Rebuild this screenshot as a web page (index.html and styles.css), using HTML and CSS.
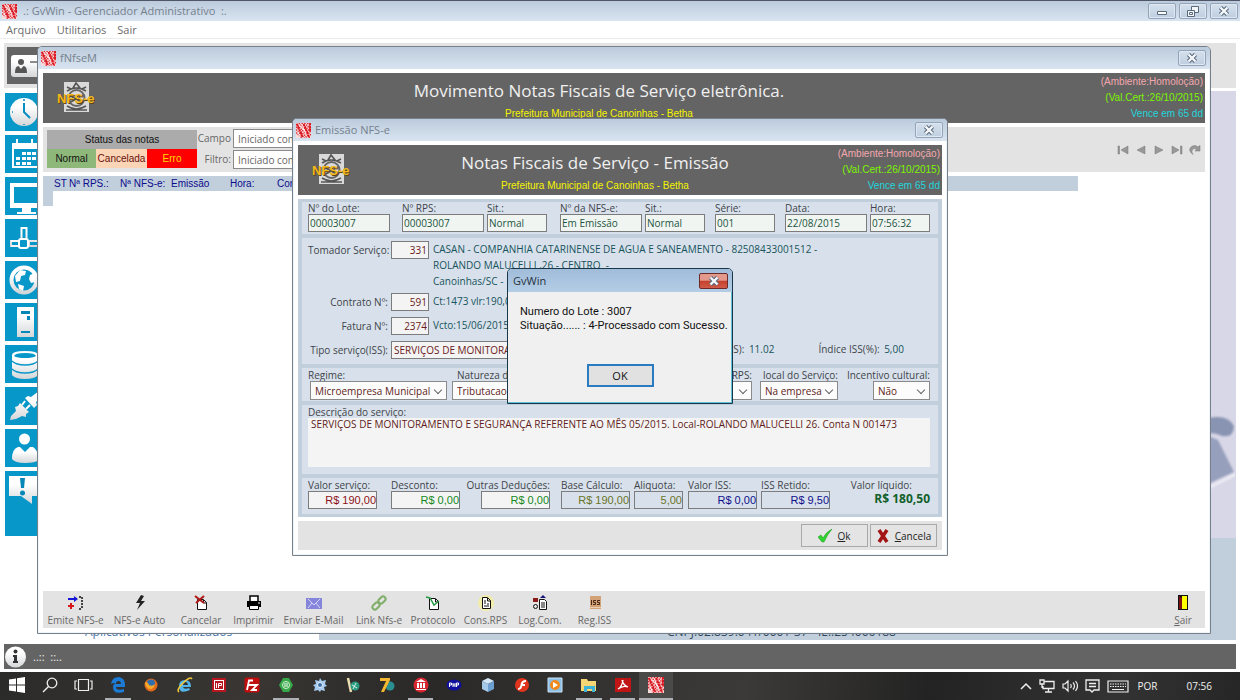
FILE: index.html
```html
<!DOCTYPE html>
<html lang="pt-BR">
<head>
<meta charset="utf-8">
<title>GvWin - Gerenciador Administrativo</title>
<link rel="stylesheet" href="styles.css">
</head>
<body>
<svg class="defs" aria-hidden="true">
  <defs>
    <symbol id="gv" viewBox="0 0 16 16">
      <path fill="#fbdcdc" d="M0 0h16v16H0z"/>
      <path stroke="#dc2630" stroke-width="1.400" stroke-dasharray="1.600 .8" d="M0 1l15 15M0 4l12 12M0 7l9 9M0 10l6 6M3 0l13 13M6 0l10 10M9 0l7 7M12 0l4 4"/>
      <path stroke="#d8141c" stroke-width="2" stroke-dasharray="2.500 .6" d="M1 1l6 14M8 1l6 14M15 0v9"/>
      <path stroke="#fff" stroke-width=".8" d="M6 1l5 12M2 9l2 6"/>
    </symbol>
    <symbol id="x" viewBox="0 0 12 10">
      <path fill="none" stroke="#596a7d" stroke-width="4.400" d="M2.500 1.500l7 7M9.500 1.500l-7 7"/>
      <path fill="none" stroke="#f7f9fb" stroke-width="2.400" d="M2.500 1.500l7 7M9.500 1.500l-7 7"/>
    </symbol>
    <symbol id="nfse" viewBox="0 0 38 32">
      <path fill="#d9d9d9" d="M7 1h25v30H7z"/>
      <path fill="none" stroke="#555" stroke-width="1.600" d="M19 2l-3 5h7zM10 10q9-6 19 0M10 25q9 6 19 0M12 14l14 8M26 14l-14 8M9 29h21M14 8l-4-2M25 8l4-2"/>
      <circle cx="19.500" cy="17" r="8" fill="none" stroke="#666" stroke-width="2"/>
      <text x="1" y="23" class="nfse-shadow">NFS-e</text>
      <text x="0" y="22" class="nfse-text">NFS-e</text>
    </symbol>
    <linearGradient id="tile" x1="0" y1="0" x2="0" y2="1"><stop offset="0.300" stop-color="#fff"/><stop offset="1" stop-color="#d4d6d8"/></linearGradient>
  </defs>
</svg>

<header class="titlebar app-title">
  <svg class="logo"><use href="#gv"/></svg>
  <h1>.: GvWin - Gerenciador Administrativo&nbsp; :.</h1>
  <div class="caption-buttons">
    <button class="cap" aria-label="Minimizar"><svg width="12" height="10"><path fill="#fff" stroke="#596a7d" d="M1.500 5.500h9v3h-9z"/></svg></button>
    <button class="cap" aria-label="Restaurar"><svg width="12" height="11"><path fill="#f4f7fa" stroke="#596a7d" d="M4.500.5h7v6h-7z"/><path fill="#f4f7fa" stroke="#596a7d" d="M.5 4.500h7v6h-7zM2.500 6.500h3v2h-3z"/></svg></button>
    <button class="cap" aria-label="Fechar"><svg width="12" height="10"><use href="#x"/></svg></button>
  </div>
</header>
<nav class="menubar"><a href="#">Arquivo</a><a href="#">Utilitarios</a><a href="#">Sair</a></nav>

<main class="workspace">
  <div class="topstrip"><button class="contact" aria-label="Clientes"><svg width="32" height="22"><rect width="40" height="22" rx="3" fill="url(#tile)"/><circle cx="10" cy="7" r="3" fill="#555"/><path fill="#555" d="M4 18q0-7 3.500-7l2.500 3 2.500-3q3.500 0 3.500 7z"/><path stroke="#666" stroke-width="1.500" d="M19 7h13"/></svg></button></div>
  <div class="desk">
    <div class="sidebar">
      <button class="tile" aria-label="Hora"><svg viewBox="0 0 36 38"><circle cx="19" cy="19" r="14" fill="url(#tile)"/><path fill="none" stroke="#0a8fc2" stroke-width="2" d="M19 10v9l6 6"/><path stroke="#0a8fc2" stroke-width="1.500" d="M19 6v2M7 19h1M19 31v1"/></svg></button>
      <button class="tile" aria-label="Agenda"><svg viewBox="0 0 36 38"><path fill="none" stroke="#fff" stroke-width="2" d="M8 9h30v23H8zM12 4v7M27 4v7"/><path fill="#fff" d="M8 9h30v5H8zM17 17h4v3h-4zM22 17h4v3h-4zM27 17h4v3h-4zM11 22h4v3h-4zM17 22h4v3h-4zM22 22h4v3h-4zM27 22h4v3h-4zM11 27h4v3h-4zM17 27h4v3h-4zM22 27h4v3h-4z"/></svg></button>
      <button class="tile" aria-label="Computador"><svg viewBox="0 0 36 38"><path fill="#fff" fill-rule="evenodd" d="M5 6h36v25H5zM9 10v16h32V10zM17 31h9v4h5v2H12v-2h5z"/></svg></button>
      <button class="tile" aria-label="Rede"><svg viewBox="0 0 36 38"><path fill="none" stroke="url(#tile)" stroke-width="2" d="M16.500 21V9h5v12M14 27H6v-5h8M24 22h12v5H24z"/><rect x="14" y="20" width="9" height="9" rx="2" fill="#0897c9" stroke="#fff" stroke-width="2"/><path stroke="#fff" stroke-width="1.500" d="M6 22h8M6 27h8"/></svg></button>
      <button class="tile" aria-label="Internet"><svg viewBox="0 0 36 38"><circle cx="19" cy="19" r="12.500" fill="#0897c9" stroke="url(#tile)" stroke-width="4"/><path fill="#fff" d="M10 15l5-6 6 1-1 4-4 1-1 5-4 1zM13 23l6 2-1 5-4-2zM25 14l5-2v9l-4 1-2-4z"/></svg></button>
      <button class="tile" aria-label="Servidor"><svg viewBox="0 0 36 38"><path fill="url(#tile)" d="M12 4h17v30H12z"/><path fill="#0787b8" d="M16 8h9v3h-9zM22 13h3v4h-3zM16 28h9v2h-9z"/></svg></button>
      <button class="tile" aria-label="Banco de dados"><svg viewBox="0 0 36 38"><path fill="url(#tile)" d="M7 10q0-4 13-4t13 4v20q-3 4-13 4T7 30z"/><path fill="#0897c9" d="M9 11q1-3 11-3t11 3q-3 2-11 2t-11-2z"/><path fill="none" stroke="#0897c9" stroke-width="1.500" d="M7 16q4 4 13 4t13-4M7 24q4 4 13 4t13-4"/></svg></button>
      <button class="tile" aria-label="Conexão"><svg viewBox="0 0 36 38"><path fill="url(#tile)" d="M5 33l1-4 5-5-1-4 3-1 2-3 9 9-3 2 0 3-4-1-6 3zM20 11l3-2 3 1 8-6 4 4-7 7 1 3-3 3z"/><path stroke="#fff" stroke-width="2" d="M17 18l3-4M21 22l4-4"/></svg></button>
      <button class="tile" aria-label="Usuário"><svg viewBox="0 0 36 38"><circle cx="19.500" cy="10" r="5.500" fill="#fff"/><path fill="url(#tile)" d="M7 30q0-10 6-12h2l5 5 5-5h3q5 3 6 13-4 3-14 3T7 30z"/></svg></button>
      <button class="tile last" aria-label="Avisos"><svg viewBox="0 0 36 38"><path fill="url(#tile)" d="M4 5h32v20H27v8l-11-8H4z"/><path fill="#0787b8" d="M15 7h5l-1 10h-3z"/><circle cx="17.500" cy="22" r="2.500" fill="#0787b8"/></svg></button>
    </div>
    <div class="wallpaper">
      <svg width="25" height="100" viewBox="0 0 25 100"><defs><filter id="soft"><feGaussianBlur stdDeviation="1"/></filter></defs><g filter="url(#soft)"><path fill="#8994b2" d="M-2 4q20-4 26 8 0 12-12 10-8-4-14-2z"/><path fill="#969fbb" d="M-2 22l10 4 16 32-26 12z"/><path stroke="#f2f2f8" stroke-width="2" d="M-2 74l28-14"/></g></svg>
    </div>
    <div class="desk-foot"><span class="apps">Aplicativos Personalizados</span><span class="cnpj">CNPJ:02.839.041/0001-37 - IE.:254006188</span></div>
  </div>

  <section class="window main-window" aria-label="fNfseM">
    <header class="titlebar">
      <svg class="logo"><use href="#gv"/></svg><h2>fNfseM</h2>
      <div class="caption-buttons"><button class="cap" aria-label="Fechar"><svg width="12" height="10"><use href="#x"/></svg></button></div>
    </header>
    <div class="banner">
      <svg class="nfse"><use href="#nfse"/></svg>
      <div class="banner-title"><h3>Movimento Notas Fiscais de Serviço eletrônica.</h3><p>Prefeitura Municipal de Canoinhas - Betha</p></div>
      <div class="cert"><span class="pink">(Ambiente:Homoloção)</span><span class="lime">(Val.Cert.:26/10/2015)</span><span class="cyan">Vence em 65 dd</span></div>
    </div>
    <div class="filterbar">
      <div class="status"><div class="status-head">Status das notas</div><span class="normal">Normal</span><span class="cancelada">Cancelada</span><span class="erro">Erro</span></div>
      <div class="filters">
        <label for="campo">Campo</label><input id="campo" value="Iniciado com">
        <label for="filtro">Filtro:</label><input id="filtro" value="Iniciado com">
      </div>
      <div class="navigator">
        <button aria-label="Primeiro"><svg viewBox="0 0 12 10"><path d="M1 1h1.500v8H1zM11 1v8L4 5z"/></svg></button>
        <button aria-label="Anterior"><svg viewBox="0 0 12 10"><path d="M10 1v8L2 5z"/></svg></button>
        <button aria-label="Próximo"><svg viewBox="0 0 12 10"><path d="M2 1v8l8-4z"/></svg></button>
        <button aria-label="Último"><svg viewBox="0 0 12 10"><path d="M1 1v8l7-4zM9.500 1H11v8H9.500z"/></svg></button>
        <button aria-label="Atualizar"><svg viewBox="0 0 12 10"><path d="M4 9.500Q-1 6 1.500 2.500 5-1 9 2l2-1.500V6H6l1.500-1.500Q5 2.500 3.500 4.500T4 9.500z"/></svg></button>
      </div>
    </div>
    <div class="grid-area">
      <table class="notes"><thead><tr><th>ST</th><th>Nª RPS.:</th><th>Nª NFS-e:</th><th>Emissão</th><th>Hora:</th><th>Contrato</th></tr></thead></table>
      <div class="row-mark"></div>
    </div>
    <footer class="toolbar">
      <div class="tools">
        <button><svg viewBox="0 0 16 16"><path fill="#1616d8" d="M0 3h6V1l4 3-4 3V5H0z"/><path fill="#d81818" d="M2 8h2v2h2v2H4v2H2v-2H0v-2h2z"/><path stroke="#111" stroke-width="1.500" stroke-dasharray="2 1" d="M11 2h3M14 2v12M11 14h3"/></svg>Emite NFS-e</button>
        <button><svg viewBox="0 0 16 16"><path fill="#222" d="M9 0L4 8h4l-3 7 8-9H9l3-5z"/></svg>NFS-e Auto</button>
        <button><svg viewBox="0 0 16 16"><path fill="#fff" stroke="#111" d="M4.500 4.500h6l3 3v7h-9zM10.500 5v3h3"/><path stroke="#b01818" stroke-width="2" d="M2 1l9 7M11 1L3 8"/></svg>Cancelar</button>
        <button><svg viewBox="0 0 16 16"><path fill="#fff" stroke="#000" stroke-width="1.500" d="M4 6V1h8v5"/><path d="M1 6h14v6H1z"/><path fill="#fff" stroke="#000" d="M3.500 10.500h9v4h-9z"/><path stroke="#fff" d="M12 8h2"/></svg>Imprimir</button>
        <button><svg viewBox="0 0 16 16"><path fill="#8585dc" d="M0 3h16v11H0z"/><path fill="none" stroke="#d6d6f5" d="M2 4l6 6 6-6M2 13l4-5M14 13l-4-5"/></svg>Enviar E-Mail</button>
        <button><svg viewBox="0 0 16 16"><g fill="none" stroke="#7fae68" stroke-width="2"><rect x="7" y="2.500" width="8" height="5" rx="2.500" transform="rotate(-45 11 5)"/><rect x="1" y="8.500" width="8" height="5" rx="2.500" transform="rotate(-45 5 11)"/></g></svg>Link Nfs-e</button>
        <button><svg viewBox="0 0 16 16"><path fill="#fff" stroke="#111" d="M4.500 3.500h6l3 3v8h-9zM10.500 4v3h3"/><path fill="none" stroke="#2a9b48" stroke-width="1.500" d="M1 2l4 1 4 7 5-4"/></svg>Protocolo</button>
        <button><svg viewBox="0 0 16 16"><circle cx="8" cy="8" r="8" fill="#f2ecaa"/><path fill="#fff" stroke="#111" d="M4.500 2.500h5l3 3v8h-8zM9.500 3v3h3M6 6h2M6 8h2M6 11h5M9 9h2"/></svg>Cons.RPS</button>
        <button><svg viewBox="0 0 16 16"><path fill="#8b1a1a" d="M1 3h5v4H1z"/><circle cx="3.500" cy="11.500" r="2" fill="none" stroke="#111"/><path fill="#15157a" d="M11 0l3 3H8z"/><path fill="#fff" stroke="#111" d="M7.500 4.500h5l2 2v8h-7zM9 8h4M9 10h4M9 12h4"/></svg>Log.Com.</button>
        <button><svg viewBox="0 0 16 16"><path fill="#d3a276" d="M3 1h11v13H3z"/><path fill="#e9d0b5" d="M3 12h11v1H3z"/><path fill="none" stroke="#4a2818" d="M4.500 5v5M9 5.500H6.500v2H8.500v2H6M13 5.500h-2.500v2h2v2H10"/></svg>Reg.ISS</button>
      </div>
      <button class="exit"><svg viewBox="0 0 16 16"><path fill="#111" d="M3 0h10v15H3z"/><path fill="#ff0" d="M7 1h5v13H7z"/><path fill="#7b1212" d="M4 1l3 2v11H4z"/></svg><span><u>S</u>air</span></button>
    </footer>
  </section>

  <section class="window emission" aria-label="Emissão NFS-e">
    <header class="titlebar">
      <svg class="logo"><use href="#gv"/></svg><h2>Emissão NFS-e</h2>
      <div class="caption-buttons"><button class="cap" aria-label="Fechar"><svg width="12" height="10"><use href="#x"/></svg></button></div>
    </header>
    <div class="banner">
      <svg class="nfse"><use href="#nfse"/></svg>
      <div class="banner-title"><h3>Notas Fiscais de Serviço - Emissão</h3><p>Prefeitura Municipal de Canoinhas - Betha</p></div>
      <div class="cert"><span class="pink">(Ambiente:Homoloção)</span><span class="lime">(Val.Cert.:26/10/2015)</span><span class="cyan">Vence em 65 dd</span></div>
    </div>
    <form class="panel">
      <div class="sec ident">
        <div class="field"><label for="lote">Nº do Lote:</label><input id="lote" value="00003007"></div>
        <div class="field"><label for="rps">Nº RPS:</label><input id="rps" value="00003007"></div>
        <div class="field"><label for="sit1">Sit.:</label><input id="sit1" class="short" value="Normal"></div>
        <div class="field"><label for="nfs">Nº da NFS-e:</label><input id="nfs" value="Em Emissão"></div>
        <div class="field"><label for="sit2">Sit.:</label><input id="sit2" class="short" value="Normal"></div>
        <div class="field"><label for="serie">Série:</label><input id="serie" class="short" value="001"></div>
        <div class="field"><label for="data">Data:</label><input id="data" value="22/08/2015"></div>
        <div class="field"><label for="hora">Hora:</label><input id="hora" class="short" value="07:56:32"></div>
      </div>
      <div class="sec service">
        <label for="tomador">Tomador Serviço:</label><input id="tomador" value="331">
        <div class="info addr">CASAN - COMPANHIA CATARINENSE DE AGUA E SANEAMENTO - 82508433001512 -<br>ROLANDO MALUCELLI ,26 - CENTRO&nbsp; -<br>Canoinhas/SC -</div>
        <label for="contrato">Contrato Nº:</label><input id="contrato" value="591"><div class="info">Ct:1473 vlr:190,00</div>
        <label for="fatura">Fatura Nº:</label><input id="fatura" value="2374"><div class="info">Vcto:15/06/2015</div>
        <label for="tipo">Tipo serviço(ISS):</label>
        <div class="tipo"><input id="tipo" value="SERVIÇOS DE MONITORAMENTO"><span class="iss">(ISS): <b>11.02</b></span><span class="indice">Índice ISS(%): <b>5,00</b></span></div>
      </div>
      <div class="sec options">
        <div class="field regime"><label for="regime">Regime:</label><span class="pick"><select id="regime"><option>Microempresa Municipal</option></select></span></div>
        <div class="field nat"><label for="natureza">Natureza da operação:</label><span class="pick"><select id="natureza"><option>Tributacao no municipio</option></select></span></div>
        <div class="field rps"><label for="tiporps">Tipo RPS:</label><span class="pick"><select id="tiporps"><option>RPS</option></select></span></div>
        <div class="field loc"><label for="local">local do Serviço:</label><span class="pick"><select id="local"><option>Na empresa</option></select></span></div>
        <div class="field inc"><label for="incentivo">Incentivo cultural:</label><span class="pick"><select id="incentivo"><option>Não</option></select></span></div>
      </div>
      <div class="sec description"><label for="desc">Descrição do serviço:</label><textarea id="desc" spellcheck="false">SERVIÇOS DE MONITORAMENTO E SEGURANÇA REFERENTE AO MÊS 05/2015. Local-ROLANDO MALUCELLI 26. Conta N 001473</textarea></div>
      <div class="sec totals">
        <div class="field red"><label for="valor">Valor serviço:</label><input id="valor" value="R$ 190,00"></div>
        <div class="field green"><label for="desconto">Desconto:</label><input id="desconto" value="R$ 0,00"></div>
        <div class="field green right"><label for="deducoes">Outras Deduções:</label><input id="deducoes" value="R$ 0,00"></div>
        <div class="field olive"><label for="base">Base Cálculo:</label><input id="base" value="R$ 190,00"></div>
        <div class="field olive rate"><label for="aliquota">Aliquota:</label><input id="aliquota" value="5,00"></div>
        <div class="field blue"><label for="iss">Valor ISS:</label><input id="iss" value="R$ 0,00"></div>
        <div class="field blue"><label for="retido">ISS Retido:</label><input id="retido" value="R$ 9,50"></div>
        <div class="field net"><label for="liquido">Valor líquido:</label><output id="liquido">R$ 180,50</output></div>
      </div>
    </form>
    <footer class="actions">
      <button><svg width="14" height="14" viewBox="0 0 14 14"><path fill="#2fd52f" stroke="#159015" stroke-width=".5" d="M0 8l3-2 2 3Q8 3 14 0 9 6 6 13H4z"/></svg><span><u>O</u>k</span></button>
      <button><svg width="14" height="14" viewBox="0 0 14 14"><path fill="none" stroke="#a31515" stroke-width="3.500" d="M3 1l8 12M11 1L3 13"/></svg><span><u>C</u>ancela</span></button>
    </footer>
  </section>

  <section class="message" role="dialog" aria-label="GvWin">
    <header><h2>GvWin</h2><button class="close" aria-label="Fechar"><svg width="12" height="10"><use href="#x"/></svg></button></header>
    <div class="message-body"><p>Numero do Lote : 3007<br>Situação...... : 4-Processado com Sucesso.</p><button class="ok">OK</button></div>
  </section>
</main>

<div class="statusbar"><svg width="23" height="22" viewBox="0 0 23 22"><circle cx="11.500" cy="11" r="10.500" fill="url(#tile)"/><circle cx="11.500" cy="5.500" r="2" fill="#333"/><path fill="#333" d="M9 9h4v6h1v2H9v-2h1v-4H9z"/></svg><span>..:: &nbsp;::..</span></div>

<footer class="taskbar">
  <div class="apps-bar">
    <button aria-label="Iniciar"><svg viewBox="0 0 16 16"><path fill="#fff" d="M0 2.500l7-1v6H0zM8 1.300L16 0v7.500H8zM0 8.500h7v6l-7-1zM8 8.500h8V16l-8-1.300z"/></svg></button>
    <button aria-label="Pesquisar"><svg viewBox="0 0 16 16"><circle cx="10" cy="6" r="4.800" fill="none" stroke="#eee" stroke-width="1.300"/><path stroke="#eee" stroke-width="1.500" d="M6.500 9.500L1 15"/></svg></button>
    <button aria-label="Visão de tarefas"><svg class="wide" viewBox="0 0 20 16"><path fill="none" stroke="#eee" stroke-width="1.200" d="M4.500 2.500h10v11h-10zM3 4H1v8h2M16 4h2v8h-2"/></svg></button>
    <button class="on" aria-label="Edge"><svg viewBox="0 0 16 16"><path fill="#1b7bd6" d="M1 7Q2 0 9 0q6 1 6 8v2H6q0 4 8 2v3Q3 18 3 10q0-3 3-4-4 0-5 1zm5 0h5q0-3-2.500-3T6 7z"/></svg></button>
    <button aria-label="Firefox"><svg viewBox="0 0 16 16"><circle cx="8" cy="8" r="6.500" fill="#e56a17"/><circle cx="8" cy="6.500" r="4" fill="#2f6fb0"/><path fill="#f6a82a" d="M2 5q3 0 4 3 3 2 6-1-1 6-6 5-4-2-4-7z"/></svg></button>
    <button aria-label="Internet Explorer"><svg viewBox="0 0 16 16"><path fill="#52b6ea" d="M2 9Q2 3 8 3q6 0 6 7H6q1 3 6 1l1 2Q2 18 2 9zm4-1h5q-.5-3-2.500-3T6 8z"/><path fill="none" stroke="#f3c838" stroke-width="1.500" d="M2 15Q-1 13 6 6t9-4"/></svg></button>
    <button aria-label="IP"><svg viewBox="0 0 16 16"><path fill="#fff" stroke="#b71820" stroke-width="2" d="M2 2h12v12H2z"/><path fill="#b71820" d="M4 4h8v8H4z"/><path fill="none" stroke="#fff" d="M5.500 6v5M7.500 11V6.500h3v2h-3"/></svg></button>
    <button aria-label="FileZilla"><svg viewBox="0 0 16 16"><rect x=".5" y=".5" width="15" height="15" rx="2" fill="#c00d0d"/><path fill="none" stroke="#fff" stroke-width="1.800" d="M3 13L5 3.500h4M4 8h4M8 8h5l-5 5h5"/></svg></button>
    <button class="on" aria-label="Servidor local"><svg viewBox="0 0 16 16"><path fill="#37a847" d="M5 1h6l4 7-4 7H5L1 8z"/><circle cx="8" cy="8" r="3.500" fill="none" stroke="#d9f2d9"/><path stroke="#fff" d="M6 7h4M6 9h4"/></svg></button>
    <button aria-label="Configurador"><svg viewBox="0 0 16 16"><path fill="#a8cdf0" d="M8 1l2 3 4-1-1 4 2 2-3 1 1 4-4-1-1 2-2-2-4 1 1-4-2-2 3-1-1-4 4 1z"/><circle cx="8" cy="8" r="2.500" fill="#3f6da3" stroke="#e3effa"/></svg></button>
    <button aria-label="Delphi"><svg viewBox="0 0 16 16"><path stroke="#e9dfb0" stroke-width="2.500" d="M3 1l3 14"/><circle cx="10" cy="9" r="4.500" fill="#2a9b80"/><path fill="none" stroke="#d8f0e8" d="M8 12l3-6M7 8l5 3"/></svg></button>
    <button aria-label="Delphi 7"><svg viewBox="0 0 16 16"><circle cx="11" cy="9" r="4.500" fill="#2a8f90"/><path fill="#f2b630" d="M1 1h10v2L5 15H2l5-11H1z"/></svg></button>
    <button class="on" aria-label="Banco"><svg viewBox="0 0 16 16"><circle cx="8" cy="8" r="7.500" fill="#d7262e"/><path fill="#fff" d="M8 2l5 3H3zM4 6h2v5H4zM7 6h2v5H7zM10 6h2v5h-2zM3 12h10v1H3z"/></svg></button>
    <button aria-label="PHP"><svg viewBox="0 0 16 16"><ellipse cx="8" cy="8" rx="7.500" ry="5.500" fill="#10109a"/><path fill="none" stroke="#fff" d="M3.500 10V6h2v2h-2M7 6v4M9 6v4M7 8h2M10.500 10V6h2v2h-2"/></svg></button>
    <button aria-label="VirtualBox"><svg viewBox="0 0 16 16"><path fill="#d5e8f9" d="M2 4l6-3 6 3-6 3z"/><path fill="#a6c9ea" d="M2 4l6 3v8l-6-3z"/><path fill="#6e9fd1" d="M14 4L8 7v8l6-3z"/></svg></button>
    <button aria-label="Flash"><svg viewBox="0 0 16 16"><circle cx="8" cy="8" r="7" fill="#e1341c"/><path fill="none" stroke="#fff" stroke-width="2" d="M12 4Q8 4 7.500 8T4 12M7 8h4"/></svg></button>
    <button aria-label="Media Player"><svg viewBox="0 0 16 16"><path fill="#8cc0e8" stroke="#c9e2f5" d="M1 1h14v14H1z"/><circle cx="8" cy="8" r="5" fill="#f08a1d"/><path fill="#fff" d="M6 5v6l5-3z"/></svg></button>
    <button class="on" aria-label="Explorador"><svg viewBox="0 0 16 16"><path fill="#f4d675" d="M0 2h6l1 2h8v10H0z"/><path fill="#3cb3d9" d="M3 9h11v6h-3v-3H6v3H3z"/></svg></button>
    <button class="on" aria-label="Acrobat"><svg viewBox="0 0 16 16"><path fill="#c11515" d="M0 1h16v14H0z"/><path fill="none" stroke="#fff" stroke-width="1.300" d="M7 3q1 5 6 7-5-2-10 2 4-2 5-9"/></svg></button>
    <button class="on current" aria-label="GvWin"><svg><use href="#gv"/></svg></button>
  </div>
  <div class="tray">
    <svg width="12" height="8"><path fill="none" stroke="#eee" stroke-width="1.500" d="M1 7l5-5 5 5"/></svg>
    <svg width="16" height="14"><path fill="none" stroke="#eee" stroke-width="1.300" d="M5 2.500h10v7H4V7M9.500 10v3M6 13h7M1 1h4v4H1zM3 5v4"/></svg>
    <svg width="16" height="14"><path fill="none" stroke="#eee" stroke-width="1.200" d="M1 5h2l3-3v10L3 9H1zM8.500 5q1.500 2 0 4M11 3.500q3 3.500 0 7M13.500 2q4 5 0 10"/></svg>
    <svg width="15" height="15"><path fill="none" stroke="#eee" stroke-width="1.300" d="M1 1h13v10H9l-2 2-2-2H1zM4 4.500h7M4 7.500h7"/></svg>
    <svg width="22" height="13"><path fill="none" stroke="#eee" stroke-width="1.200" d="M1 1h20v11H1z"/><path stroke="#eee" stroke-dasharray="1.500 1" d="M3 4h16M3 6.500h16"/><path stroke="#eee" d="M5 9.500h12"/></svg>
    <span class="lang">POR</span><time>07:56</time>
  </div>
</footer>
</body>
</html>
```
FILE: styles.css
```css
* { box-sizing: border-box; }
html, body { height: 100%; }
body {
  margin: 0; display: flex; flex-direction: column; overflow: hidden; background: #fff;
  font: 11px/14px "Open Sans", "Noto Sans", sans-serif; color: #3f444a;
}
h1, h2, h3, p { margin: 0; font-weight: 400; }
button, input, select, textarea { font: inherit; color: inherit; margin: 0; border-radius: 0; }
button { padding: 0; border: 0; background: none; }
svg { display: block; flex: none; }
.defs { position: absolute; width: 0; height: 0; }
.nfse-text, .nfse-shadow { font: 700 13px "Liberation Sans", sans-serif; }

/* Title bars */
.titlebar { display: flex; align-items: center; gap: 4px; flex: none; height: 22px; background: linear-gradient(#bccbdc, #d8e4f0); color: #75818e; }
.titlebar h1, .titlebar h2 { font-size: 11px; line-height: 14px; flex: 1; }
.logo { width: 15px; height: 15px; }
.app-title { border-top: 1px solid #4f5767; height: 21px; padding: 0 2px; gap: 6px; }
.caption-buttons { display: flex; gap: 3px; }
.cap { width: 28px; height: 16px; display: grid; place-items: center; border: 1px solid #93a4ba; border-radius: 2px; background: linear-gradient(#d5e0ec, #bfcfe0); box-shadow: inset 0 0 0 1px #dfe8f1; }
.menubar { flex: none; height: 18px; display: flex; gap: 11px; padding: 2px 6px; border-bottom: 1px solid #ececec; }
.menubar a { color: #6c6c6c; text-decoration: none; }

/* Desktop */
.workspace { flex: 1; position: relative; min-height: 0; display: flex; flex-direction: column; padding: 4px 4px 3px; }
.topstrip { flex: none; height: 45px; background: #e3e3e3; padding: 4px 3px; }
.contact { width: 36px; height: 37px; background: #646464; display: flex; align-items: center; padding-left: 4px; overflow: hidden; }
.desk { flex: 1; display: grid; grid-template-columns: 1fr 26px; grid-template-rows: 1fr 102px; padding-top: 3px; min-height: 0; }
.sidebar { width: 40px; padding: 2px 0 0 1px; display: flex; flex-direction: column; gap: 4px; grid-row: 1; grid-column: 1; height: 0; }
.tile { flex: none; height: 38px; width: 39px; background: #0897c9; overflow: hidden; }
.tile svg { width: 36px; height: 38px; }
.tile.last { height: 65px; }
.tile.last svg { margin-bottom: 27px; }
.wallpaper { grid-column: 2; background: #d8d7e7; display: flex; align-items: flex-end; padding-bottom: 24px; }
.desk-foot { grid-row: 2; grid-column: 1 / 3; display: flex; align-items: flex-end; font-size: 12px; line-height: 16px; }
.apps { width: 315px; padding-left: 81px; color: #4b79ad; }
.cnpj { flex: 1; align-self: stretch; display: flex; align-items: flex-end; background: #c1cfdc; padding-left: 348px; color: #33475c; }

/* MDI windows */
.window { position: absolute; display: flex; flex-direction: column; background: #fff; border: 1px solid #76808b; border-radius: 5px 5px 0 0; padding: 0 5px 5px; box-shadow: inset 0 0 0 1px #f2f5f8; }
.window > .titlebar { margin: 0 -5px 4px; padding: 0 4px 0 3px; border-radius: 4px 4px 0 0; }
.main-window { left: 37px; right: 29px; top: 7px; bottom: 9px; }
.emission { left: 292px; top: 79px; width: 656px; }
.banner { flex: none; height: 50px; background: #646464; display: grid; grid-template-columns: 70px 1fr 120px; overflow: hidden; }
.nfse { width: 38px; height: 34px; margin: 7px 0 0 14px; }
.nfse-text { fill: #f4b81c; }
.nfse-shadow { fill: #5d4410; }
.banner-title { text-align: center; padding-top: 5px; }
.banner h3 { color: #f0f0f0; font-size: 17px; line-height: 25px; }
.banner p { color: #f4f400; font: 10px/22px "Liberation Sans", sans-serif; }
.cert { display: flex; flex-direction: column; text-align: right; font: 10px/16px "Liberation Sans", sans-serif; padding: 1px 2px; }
.pink { color: #f3a7ae; } .lime { color: #7df500; } .cyan { color: #1fd6dc; }

.filterbar { flex: none; display: flex; height: 45px; margin-top: 4px; background: #e3e3e3; padding: 2px 4px; }
.status { width: 150px; display: grid; grid-template-columns: 49px 51px 50px; grid-template-rows: 19px 19px; margin-top: 1px; text-align: center; font: 10px/19px "Liberation Sans", sans-serif; color: #111; }
.status-head { grid-column: 1 / 4; background: #ababab; }
.normal { background: #8db87a; } .cancelada { background: #fbd5b5; color: #6a1010; } .erro { background: #f00; color: #ffd800; }
.filters { display: grid; grid-template-columns: 34px 180px; grid-auto-rows: 19px; gap: 2px; color: #666; font-size: 10px; line-height: 18px; text-align: right; }
.filters input { border: 1px solid #8b8b8b; background: #fff; padding: 0 4px; font-size: 10px; }
.navigator { margin-left: auto; display: flex; gap: 6px; align-items: center; }
.navigator svg { width: 12px; height: 10px; fill: #989898; stroke: #777; stroke-width: .5; }
.grid-area { flex: 1; margin-top: 4px; }
.notes { width: 1035px; border-collapse: collapse; table-layout: fixed; background: #c1cfdc; color: #0b0b8c; font: 10px/15px "Liberation Sans", sans-serif; }
.notes th { padding: 0; font-weight: 400; text-align: left; height: 15px; }
.notes th:nth-child(1) { width: 26px; padding-left: 11px; }
.notes th:nth-child(2) { width: 51px; }
.notes th:nth-child(3) { width: 51px; }
.notes th:nth-child(4) { width: 59px; }
.notes th:nth-child(5) { width: 47px; }
.row-mark { width: 10px; height: 15px; background: #c1cfdc; }
.toolbar { flex: none; display: flex; height: 37px; background: #e3e3e3; color: #696969; }
.tools { display: grid; grid-template-columns: 65px 63px 60px 45px 75px 56px 52px 53px 56px 53px; }
.toolbar button { display: flex; flex-direction: column; align-items: center; gap: 2px; padding-top: 4px; font-size: 10px; white-space: nowrap; }
.toolbar svg { width: 16px; height: 16px; }
.exit { width: 44px; margin-left: auto; }

/* Emission form */
.panel { margin-top: 4px; padding: 3px 4px; background: #c1cfdc; display: flex; flex-direction: column; gap: 4px; }
.sec { background: #d8e1eb; padding: 0 8px 0 6px; }
.field { display: flex; flex-direction: column; align-items: flex-start; white-space: nowrap; }
.panel label, .panel span { font-size: 10px; }
.field label { line-height: 11px; }
.sec input { height: 18px; border: 1px solid #7c7c7c; padding: 0 1px; background: #f4f4f4; font-size: 10px; }
.ident { display: grid; grid-template-columns: 94px 85px 73px 85px 70px 70px 85px 60px; height: 32px; padding-top: 1px; }
.ident input { width: 82px; background: #f0f5f2; color: #1c5440; }
.ident input.short { width: 60px; }
.service { display: grid; grid-template-columns: 80px 38px 1fr; column-gap: 3px; grid-template-rows: 46px 18px 18px 18px; row-gap: 6px; height: 126px; padding-top: 3px; align-items: start; }
.service label { text-align: right; line-height: 18px; white-space: nowrap; }
.service input { width: 38px; text-align: right; color: #6a1a20; }
.info { color: #17535c; font-size: 10px; line-height: 16px; padding-left: 1px; white-space: nowrap; }
.service .tipo { grid-column: 2 / 4; display: flex; line-height: 16px; }
.tipo input { width: 320px; text-align: left; padding-left: 2px; }
.tipo b { font-weight: 400; color: #17535c; margin-left: 2px; }
.iss { margin-left: 11px; }
.indice { margin-left: 44px; }
.options { display: flex; height: 33px; padding-top: 2px; }
.regime { width: 144px; padding-left: 2px; }
.regime label { margin-left: -2px; }
.nat { width: 154px; }
.nat label { padding-left: 5px; }
.rps { width: 146px; margin-right: 8px; align-items: flex-end; }
.loc { width: 78px; }
.loc label { padding-left: 3px; }
.inc { margin-left: auto; align-items: flex-end; }
.pick { position: relative; display: block; }
.pick select { appearance: none; display: block; height: 19px; width: 137px; border: 1px solid #8a8a8a; background: #fcfcfc; padding: 0 4px; color: #5f1c20; font-size: 10px; }
.nat .pick select, .rps .pick select { width: 146px; }
.loc .pick select { width: 78px; }
.inc .pick select { width: 57px; }
.pick::after { content: ""; position: absolute; right: 6px; top: 6px; width: 5px; height: 5px; border: solid #666; border-width: 0 1px 1px 0; transform: rotate(45deg); }
.description { height: 69px; display: flex; flex-direction: column; padding-top: 1px; }
.description label { line-height: 12px; }
.description textarea { height: 49px; resize: none; border: 0; background: #f4f4f4; padding: 0 3px; font-size: 10px; line-height: 13px; color: #5f1c20; overflow: hidden; }
.totals { display: grid; grid-template-columns: 83px 75px 95px 73px 54px 73px 73px 1fr; height: 36px; padding-top: 1px; }
.totals label { line-height: 12px; }
.totals input { width: 69px; text-align: right; font-family: "Liberation Sans", sans-serif; font-size: 11px; padding: 0; }
.totals .rate input { width: 49px; }
.totals .right { width: 84px; align-items: flex-end; }
.red input { color: #8c1218; } .green input { color: #128a20; }
.olive input { color: #6b7426; background: #d8e1eb; } .blue input { color: #10108c; background: #d8e1eb; }
.totals .net { align-items: flex-end; }
.net label { padding-right: 18px; }
.net output { font-size: 12px; line-height: 16px; font-weight: 700; color: #12602a; }
.actions { display: flex; justify-content: flex-end; gap: 2px; margin-top: 4px; padding: 3px 5px 3px 4px; background: #e3e3e3; }
.actions button { width: 67px; height: 23px; border: 1px solid #a9a9a9; background: #e4e4e4; color: #222; display: flex; align-items: center; justify-content: center; gap: 5px; font-size: 10px; }

/* Message box */
.message { position: absolute; left: 507px; top: 229px; width: 226px; border: 1px solid #17384b; border-radius: 5px 5px 0 0; background: #f0f0f0; color: #111; box-shadow: inset -1px -1px 0 #5fc0d6; }
.message header { height: 23px; display: flex; justify-content: space-between; align-items: center; padding: 0 4px 0 5px; border-radius: 4px 4px 0 0; background: linear-gradient(#a0bcd9, #b4cde6); }
.message h2 { font-size: 11px; color: #26323e; }
.close { width: 29px; height: 16px; display: grid; place-items: center; border: 1px solid #6d2a28; border-radius: 2px; background: linear-gradient(#e39a8c 45%, #c5402c 50%, #cf5c48); }
.message-body { padding: 13px 12px 16px; display: flex; flex-direction: column; align-items: center; gap: 31px; }
.message-body p { align-self: stretch; font: 11px/14px Roboto, "Open Sans", sans-serif; white-space: nowrap; }
.ok { width: 67px; height: 23px; border: 2px solid #2a7cc0; background: #e1e1e1; }

/* Status and task bars */
.statusbar { flex: none; height: 25px; margin: 1px 4px 3px; background: #646464; display: flex; align-items: center; gap: 6px; color: #eee; }
.taskbar { flex: none; height: 28px; display: flex; justify-content: space-between; background: linear-gradient(100deg, #2b2b2a, #393633 20%, #2a2928 35%, #3c3a38 60%, #232323 75%, #333 90%, #262626); }
.apps-bar { display: grid; grid-template-columns: repeat(20, 1fr); width: 673px; }
.apps-bar button { display: flex; align-items: center; justify-content: center; border-bottom: 2px solid transparent; margin: 0 4px; }
.apps-bar svg { width: 16px; height: 16px; }
.apps-bar svg.wide { width: 20px; }
.apps-bar .on { border-color: #aeb2b6; }
.apps-bar .current { background: #4a4a49; margin: 0; }
.tray { display: flex; align-items: center; gap: 7px; color: #f0f0f0; padding-right: 28px; }
.lang { font-size: 10px; margin-left: 2px; }
.tray time { font-size: 10px; margin-left: 22px; }
```
